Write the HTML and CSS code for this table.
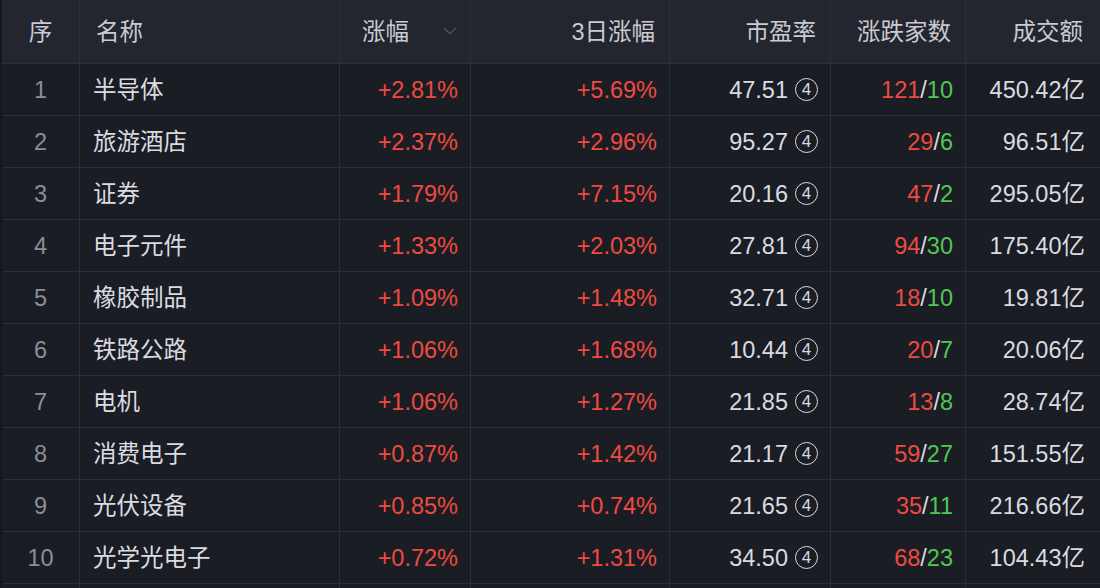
FILE: index.html
```html
<!DOCTYPE html>
<html lang="zh">
<head>
<meta charset="utf-8">
<link rel="stylesheet" href="styles.css">
</head>
<body>
<div class="table">
  <div class="row head">
    <div class="cell c-idx">序</div>
    <div class="cell c-name">名称</div>
    <div class="cell c-chg sort"><span>涨幅</span><svg class="chev" width="14" height="8" viewBox="0 0 14 8"><path d="M1 1 L7 6.5 L13 1" fill="none" stroke="#4d505a" stroke-width="1.6"/></svg></div>
    <div class="cell num">3日涨幅</div>
    <div class="cell num">市盈率</div>
    <div class="cell num">涨跌家数</div>
    <div class="cell num last">成交额</div>
  </div>
  <div class="row"><div class="cell c-idx">1</div><div class="cell c-name">半导体</div><div class="cell num up">+2.81%</div><div class="cell num up">+5.69%</div><div class="cell num">47.51<span class="circ">4</span></div><div class="cell num"><span class="up">121</span>/<span class="down">10</span></div><div class="cell num last">450.42亿</div></div>
  <div class="row"><div class="cell c-idx">2</div><div class="cell c-name">旅游酒店</div><div class="cell num up">+2.37%</div><div class="cell num up">+2.96%</div><div class="cell num">95.27<span class="circ">4</span></div><div class="cell num"><span class="up">29</span>/<span class="down">6</span></div><div class="cell num last">96.51亿</div></div>
  <div class="row"><div class="cell c-idx">3</div><div class="cell c-name">证券</div><div class="cell num up">+1.79%</div><div class="cell num up">+7.15%</div><div class="cell num">20.16<span class="circ">4</span></div><div class="cell num"><span class="up">47</span>/<span class="down">2</span></div><div class="cell num last">295.05亿</div></div>
  <div class="row"><div class="cell c-idx">4</div><div class="cell c-name">电子元件</div><div class="cell num up">+1.33%</div><div class="cell num up">+2.03%</div><div class="cell num">27.81<span class="circ">4</span></div><div class="cell num"><span class="up">94</span>/<span class="down">30</span></div><div class="cell num last">175.40亿</div></div>
  <div class="row"><div class="cell c-idx">5</div><div class="cell c-name">橡胶制品</div><div class="cell num up">+1.09%</div><div class="cell num up">+1.48%</div><div class="cell num">32.71<span class="circ">4</span></div><div class="cell num"><span class="up">18</span>/<span class="down">10</span></div><div class="cell num last">19.81亿</div></div>
  <div class="row"><div class="cell c-idx">6</div><div class="cell c-name">铁路公路</div><div class="cell num up">+1.06%</div><div class="cell num up">+1.68%</div><div class="cell num">10.44<span class="circ">4</span></div><div class="cell num"><span class="up">20</span>/<span class="down">7</span></div><div class="cell num last">20.06亿</div></div>
  <div class="row"><div class="cell c-idx">7</div><div class="cell c-name">电机</div><div class="cell num up">+1.06%</div><div class="cell num up">+1.27%</div><div class="cell num">21.85<span class="circ">4</span></div><div class="cell num"><span class="up">13</span>/<span class="down">8</span></div><div class="cell num last">28.74亿</div></div>
  <div class="row"><div class="cell c-idx">8</div><div class="cell c-name">消费电子</div><div class="cell num up">+0.87%</div><div class="cell num up">+1.42%</div><div class="cell num">21.17<span class="circ">4</span></div><div class="cell num"><span class="up">59</span>/<span class="down">27</span></div><div class="cell num last">151.55亿</div></div>
  <div class="row"><div class="cell c-idx">9</div><div class="cell c-name">光伏设备</div><div class="cell num up">+0.85%</div><div class="cell num up">+0.74%</div><div class="cell num">21.65<span class="circ">4</span></div><div class="cell num"><span class="up">35</span>/<span class="down">11</span></div><div class="cell num last">216.66亿</div></div>
  <div class="row"><div class="cell c-idx">10</div><div class="cell c-name">光学光电子</div><div class="cell num up">+0.72%</div><div class="cell num up">+1.31%</div><div class="cell num">34.50<span class="circ">4</span></div><div class="cell num"><span class="up">68</span>/<span class="down">23</span></div><div class="cell num last">104.43亿</div></div>
  <div class="row stub"><div class="cell"></div><div class="cell"></div><div class="cell"></div><div class="cell"></div><div class="cell"></div><div class="cell"></div><div class="cell last"></div></div>
</div>
</body>
</html>
```

FILE: styles.css
```css
html, body {
  margin: 0;
  padding: 0;
  background: #1b1d24;
  height: 588px;
  overflow: hidden;
}
.table {
  font-family: "Liberation Sans", "Noto Sans CJK SC", sans-serif;
  font-size: 23.5px;
  color: #d9dbe0;
  border-left: 2px solid #16171c;
}
.row {
  display: grid;
  grid-template-columns: 78px 260px 131px 199px 161px 135px 1fr;
  height: 52px;
  background: #1b1d24;
}
.row.head {
  height: 64px;
  background: #23252f;
  color: #c9cbd1;
}
.row.stub {
  height: 4px;
}
.row.stub .cell {
  border-bottom: none;
}
.cell {
  display: flex;
  align-items: center;
  line-height: 24px;
  border-right: 1px solid #2c2f38;
  border-bottom: 1px solid #2c2f38;
  white-space: nowrap;
  box-sizing: border-box;
}
.cell.last {
  border-right: none;
}
.c-idx {
  justify-content: center;
  color: #8b8e96;
}
.head .c-idx {
  color: #c9cbd1;
}
.c-name {
  padding-left: 13px;
}
.head .c-name {
  padding-left: 16px;
}
.num {
  justify-content: flex-end;
  padding-right: 12px;
}
.num.last {
  padding-right: 15px;
}
.head .num {
  padding-right: 14px;
}
.head .num.last {
  padding-right: 17px;
}
.c-chg.sort {
  justify-content: flex-start;
  padding-left: 22px;
}
.chev {
  margin-left: 34px;
  margin-top: -2px;
}
.up {
  color: #ee4a40;
}
.down {
  color: #4fc853;
}
.circ {
  display: inline-flex;
  align-items: center;
  justify-content: center;
  width: 23px;
  height: 23px;
  margin-left: 7px;
  border: 1.5px solid #d9dbe0;
  border-radius: 50%;
  box-sizing: border-box;
  font-size: 17px;
  line-height: 1;
}
```
